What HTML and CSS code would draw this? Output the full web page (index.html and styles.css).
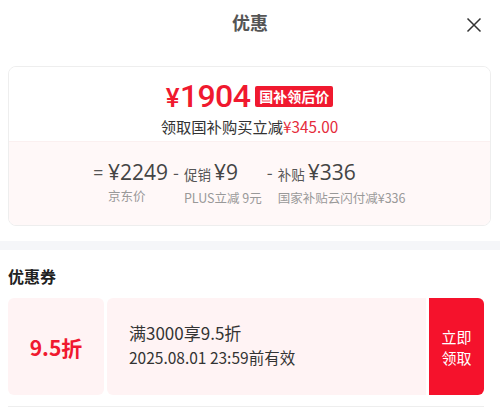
FILE: index.html
```html
<!DOCTYPE html>
<html lang="zh">
<head>
    <meta name="viewport" content="width=device-width, initial-scale=1">
    <meta charset="UTF-8">
    <title>优惠</title>
    <link rel="stylesheet" href="styles.css">
</head>
<body>
    <div class="header">
        <h1 class="title">优惠</h1>
        <span class="close">
            <svg width="16" height="16" viewBox="0 0 16 16"><path d="M1.5 1.5 L14.5 14.5 M14.5 1.5 L1.5 14.5" stroke="#333" stroke-width="1.5" fill="none"/></svg>
        </span>
    </div>

    <div class="price-card">
        <div class="price-top">
            <div class="price-row">
                <span class="price"><span class="yen">¥</span>1904</span>
                <span class="badge">国补领后价</span>
            </div>
            <div class="price-desc">领取国补购买立减<span class="red">¥345.00</span></div>
        </div>
        <div class="price-calc">
            <div class="calc-item">
                <span class="op">=</span>
                <div class="calc-body">
                    <div class="calc-val"><span class="num">¥2249</span></div>
                    <div class="calc-label">京东价</div>
                </div>
            </div>
            <div class="calc-item">
                <span class="op">-</span>
                <div class="calc-body">
                    <div class="calc-val"><span class="name">促销</span><span class="num">¥9</span></div>
                    <div class="calc-label">PLUS立减 9元</div>
                </div>
            </div>
            <div class="calc-item">
                <span class="op">-</span>
                <div class="calc-body">
                    <div class="calc-val"><span class="name">补贴</span><span class="num">¥336</span></div>
                    <div class="calc-label">国家补贴云闪付减¥336</div>
                </div>
            </div>
        </div>
    </div>

    <div class="band"></div>

    <div class="coupons">
        <h2 class="sec-title">优惠券</h2>
        <div class="coupon">
            <div class="coupon-left">9.5折</div>
            <div class="coupon-main">
                <div class="coupon-rule">满3000享9.5折</div>
                <div class="coupon-date">2025.08.01 23:59前有效</div>
            </div>
            <button class="coupon-btn">立即<br>领取</button>
        </div>
        <div class="divider"></div>
    </div>
</body>
</html>
```

FILE: styles.css
```css
body {
    margin: 0;
    padding: 0;
    background: #fff;
    font-family: "Noto Sans CJK SC", "Noto Sans", sans-serif;
    color: #333;
    width: 500px;
}

.header {
    position: relative;
    height: 44px;
    display: flex;
    align-items: center;
    justify-content: center;
}

.title {
    margin: 0;
    font-size: 18px;
    font-weight: bold;
    color: #555;
}

.close {
    position: absolute;
    right: 18px;
    top: 14px;
    width: 16px;
    height: 16px;
}

.price-card {
    margin: 22px 9px 0 8px;
    border: 1px solid #eee;
    border-radius: 8px;
    overflow: hidden;
}

.price-top {
    background: #fff;
    padding: 12px 0 5px;
    display: flex;
    flex-direction: column;
    align-items: center;
}

.price-row {
    display: flex;
    align-items: center;
    gap: 5px;
    height: 34px;
}

.price {
    font-family: Roboto, "Noto Sans", sans-serif;
    font-weight: 500;
    font-size: 32px;
    color: #f0192f;
    letter-spacing: -0.6px;
}

.yen {
    font-size: 26px;
    margin-right: 1px;
}

.badge {
    background: #f0192f;
    color: #fff;
    font-size: 14px;
    font-weight: bold;
    line-height: 21px;
    padding: 0 4px;
    border-radius: 2px;
}

.price-desc {
    font-size: 15.3px;
    line-height: 20px;
    margin-top: 3px;
    color: #333;
}

.red {
    color: #e52b3b;
}

.price-calc {
    background: #fff8f8;
    height: 84px;
    display: flex;
    justify-content: center;
    align-items: flex-start;
    gap: 5px;
    padding-top: 16px;
    box-sizing: border-box;
    border-top: 1px solid #fbf0f0;
}

.calc-item {
    display: flex;
    align-items: flex-start;
}

.op {
    font-size: 17px;
    color: #555;
    line-height: 28px;
    margin-right: 5px;
}

.calc-val {
    display: flex;
    align-items: baseline;
    gap: 3px;
    line-height: 28px;
}

.name {
    font-size: 13.5px;
    color: #555;
}

.num {
    font-family: "Open Sans", "Noto Sans", sans-serif;
    font-size: 21px;
    color: #444;
}

.calc-label {
    font-size: 12.5px;
    color: #999;
    margin-top: 0;
}

.band {
    height: 9px;
    background: #f5f6f9;
    margin-top: 15px;
}

.coupons {
    padding: 0 16px 0 8px;
}

.sec-title {
    margin: 0;
    font-size: 16px;
    font-weight: bold;
    color: #222;
    line-height: 22px;
    padding-top: 15px;
    height: 48px;
    box-sizing: border-box;
}

.coupon {
    display: flex;
    height: 97px;
    gap: 3px;
}

.coupon-left {
    width: 96px;
    background: #fff3f4;
    border-radius: 6px;
    display: flex;
    align-items: center;
    justify-content: center;
    color: #f0192f;
    font-size: 21px;
    font-weight: bold;
}

.coupon-main {
    flex: 1;
    background: #fff3f4;
    border-radius: 6px 0 0 6px;
    padding: 23px 0 0 22px;
    color: #333;
}

.coupon-rule {
    font-size: 17px;
    line-height: 24px;
}

.coupon-date {
    font-size: 15.5px;
    line-height: 24px;
}

.coupon-btn {
    width: 55px;
    border: none;
    background: #f5122c;
    color: #fff;
    font-family: inherit;
    font-size: 15px;
    line-height: 21px;
    padding: 0;
    border-radius: 0 6px 6px 0;
}

.divider {
    height: 1px;
    background: #eee;
    margin-top: 11px;
}
```
